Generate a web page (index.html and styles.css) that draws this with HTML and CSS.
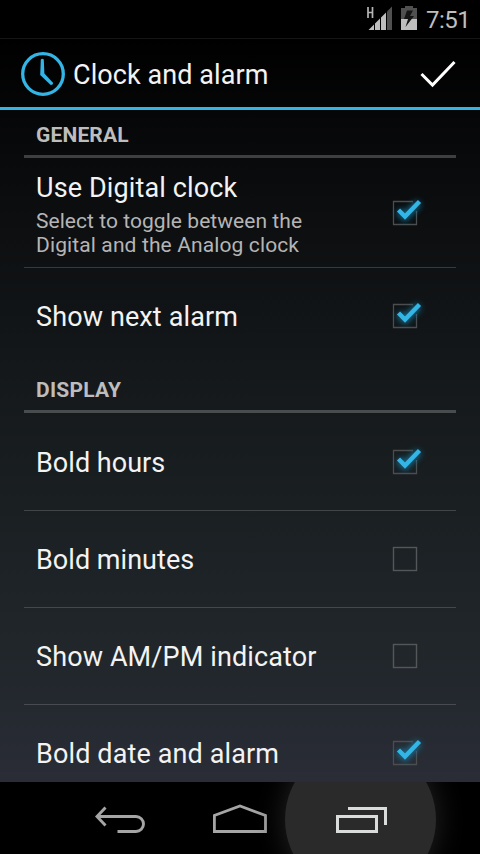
FILE: index.html
```
<!DOCTYPE html>
<html lang="en">
<head>
<meta charset="utf-8">
<title>Clock and alarm</title>
<link rel="stylesheet" href="styles.css">
</head>
<body>
<svg class="defs" width="0" height="0">
  <defs>
    <filter id="glow" x="-50%" y="-50%" width="200%" height="200%"><feGaussianBlur stdDeviation="3"/></filter>
    <g id="check-on">
      <path d="M27 8.500H7.500V31.500H30.500V18" fill="none" stroke="#4b4d4f" stroke-width="1.300"/>
      <path d="M12.500 17.500L19 24L33 9.500" fill="none" stroke="#168bb8" stroke-width="7" opacity=".75" filter="url(#glow)"/>
      <path d="M12.500 17L19 23.500L33.500 8.500" fill="none" stroke="#33b5e5" stroke-width="4.400"/>
    </g>
    <g id="check-off">
      <rect x="7.500" y="8.500" width="23" height="23" fill="none" stroke="#54575a" stroke-width="1.400"/>
    </g>
  </defs>
</svg>
<div class="screen">
  <header class="status">
    <svg class="signal" width="28" height="26" viewBox="0 0 28 26">
      <path d="M2 1V12M6.500 1V12M2 6.500H6.500" stroke="#b5b5b5" stroke-width="1.700" fill="none"/>
      <path d="M2.500 24L8 18.500V24ZM9 17.500L14 12.500V24H9ZM15 11.500L20 6.500V24H15Z" fill="#bebebe"/>
      <path d="M21 5.500L26 .500V24H21Z" fill="#505050"/>
    </svg>
    <svg class="battery" width="16" height="24" viewBox="0 0 16 24">
      <path d="M4 0H12V2H16V13H0V2H4Z" fill="#505050"/>
      <path d="M0 13H16V24H0Z" fill="#bebebe"/>
      <path d="M6 4.500L3 13H7L4.500 21L13 10H9L12 4.500Z" fill="#151515"/>
    </svg>
    <span class="time">7:51</span>
  </header>
  <div class="bar">
    <svg class="clock" width="44" height="44" viewBox="0 0 44 44">
      <circle cx="22" cy="22" r="20.300" fill="none" stroke="#33b5e5" stroke-width="3.300"/>
      <path d="M19.800 7.500Q21.300 6 22.800 7.500L23.400 21.500L32.200 31Q32 33.200 29.700 33L19.200 23Z" fill="#33b5e5"/>
    </svg>
    <h1 class="title">Clock and alarm</h1>
    <svg class="done" width="36" height="28" viewBox="0 0 36 28"><path d="M1.500 14L12.500 25L34.500 2" fill="none" stroke="#fff" stroke-width="3"/></svg>
  </div>
  <main class="list">
    <h2 class="section">GENERAL</h2>
    <div class="row tall"><div class="text"><div class="name">Use Digital clock</div><div class="summary"><span class="line">Select to toggle between the</span><br><span class="line wide">Digital and the Analog clock</span></div></div><svg class="box" width="40" height="40"><use href="#check-on"/></svg></div>
    <div class="row ruled"><div class="name">Show next alarm</div><svg class="box" width="40" height="40"><use href="#check-on"/></svg></div>
    <h2 class="section later">DISPLAY</h2>
    <div class="row"><div class="name short">Bold hours</div><svg class="box" width="40" height="40"><use href="#check-on"/></svg></div>
    <div class="row ruled"><div class="name short">Bold minutes</div><svg class="box" width="40" height="40"><use href="#check-off"/></svg></div>
    <div class="row ruled"><div class="name">Show AM/PM indicator</div><svg class="box" width="40" height="40"><use href="#check-off"/></svg></div>
    <div class="row ruled"><div class="name">Bold date and alarm</div><svg class="box" width="40" height="40"><use href="#check-on"/></svg></div>
  </main>
  <nav class="nav">
    <svg class="back" width="50" height="28" viewBox="0 0 50 28"><path d="M2 10.500H41A7.500 7.500 0 0 1 41 25.500H22.500M10.500 1.500L2 10.500L10.500 19.500" fill="none" stroke="#a5a5a5" stroke-width="2.900"/></svg>
    <svg class="home" width="54" height="30" viewBox="0 0 54 30"><path d="M1.400 27.500V11.500L27 2L52.500 11.500V27.500Z" fill="none" stroke="#a5a5a5" stroke-width="2.800"/></svg>
    <div class="recent"><svg width="52" height="28" viewBox="0 0 52 28"><path d="M1.500 10.500H40.500V25.500H1.500ZM12 2.500H49.500V19" fill="none" stroke="#dadcdc" stroke-width="3"/></svg></div>
  </nav>
</div>
</body>
</html>
```
FILE: styles.css
```
* { box-sizing: border-box; }
body { margin: 0; background: #000; font-family: Roboto, sans-serif; color: #f3f3f3; }
.defs { position: absolute; }
svg { display: block; flex: none; }
.screen { width: 480px; height: 854px; overflow: hidden; display: flex; flex-direction: column; background: linear-gradient(#000 38px, #090a0c 160px, #14181a 370px, #20262a 640px, #24282f 706px, #2a2d36 782px); }
.status { height: 38px; flex: none; display: flex; align-items: flex-start; padding: 6px 0 0 366px; background: #000; }
.battery { margin: 0 0 0 7px; }
.time { margin: 0 0 0 9px; font-size: 24px; line-height: 28px; letter-spacing: -.5px; color: #bebebe; }
.bar { height: 72px; flex: none; display: flex; align-items: center; padding: 0 24px 0 21px; border-top: 1px solid #151515; border-bottom: 3px solid #33b5e5; }
.clock { margin-top: 1px; }
.done { margin-top: 2px; }
.title { margin: 4px 0 0 8px; font-size: 27px; line-height: 32px; font-weight: 400; letter-spacing: .07px; flex: 1; }
.list { flex: 1; min-height: 0; overflow: hidden; padding: 0 24px; }
.section { margin: 0; height: 48px; padding: 12px 12px 0; font-size: 21px; line-height: 26px; font-weight: 700; letter-spacing: .15px; color: #bdbdbd; border-bottom: 3px solid rgba(255,255,255,.22); }
.later { margin-top: 1px; letter-spacing: .25px; }
.row { height: 97px; display: flex; align-items: center; justify-content: space-between; padding: 0 30px 0 12px; border-top: 1px solid transparent; }
.tall { height: 109px; }
.ruled { border-top-color: rgba(255,255,255,.17); }
.name { margin-top: 2px; font-size: 27px; line-height: 32px; letter-spacing: .12px; white-space: nowrap; }
.short { letter-spacing: .03px; }
.text .name { margin-top: 3px; }
.summary { font-size: 21px; line-height: 24px; color: #b5b5b5; white-space: nowrap; margin-top: 5px; }
.line { letter-spacing: .05px; }
.wide { letter-spacing: .12px; }
.nav { height: 72px; flex: none; overflow: hidden; background: #000; display: flex; align-items: flex-start; padding-left: 95px; }
.back { margin-top: 24px; }
.home { margin: 22px 0 0 68px; }
.recent { width: 151px; height: 151px; flex: none; margin: -38px 0 0 18px; padding: 62px 0 0 51px; border-radius: 50%; background: #2a2a2a; box-shadow: 0 0 30px #252525; }
```
